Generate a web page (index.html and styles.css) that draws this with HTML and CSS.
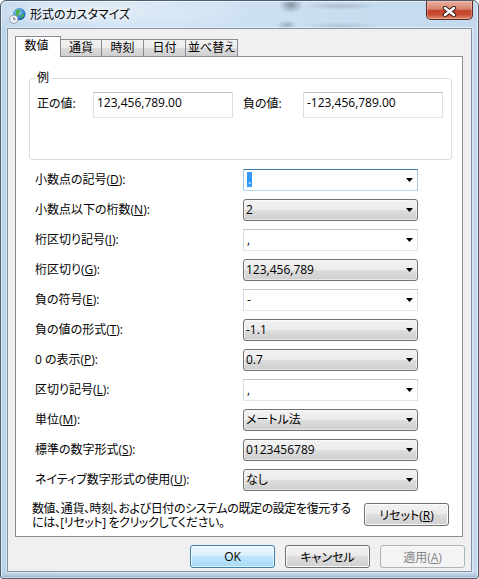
FILE: index.html
```html
<!DOCTYPE html>
<html>
<head>
    <meta charset="utf-8">
    <link rel="stylesheet" href="styles.css">
</head>
<body>
<div class="window">
    <div class="titlebar">
        <svg class="app-icon" viewBox="0 0 18 18">
            <defs>
                <radialGradient id="globe" cx="40%" cy="35%" r="65%">
                    <stop offset="0" stop-color="#9adaff"/>
                    <stop offset="1" stop-color="#0b5fb0"/>
                </radialGradient>
            </defs>
            <circle cx="11" cy="7.5" r="6.5" fill="url(#globe)"/>
            <path d="M8 3.5c1.5-.8 3-.6 3.8.4.5.8-.3 1.5-1.2 1.8-.9.3-1 1.3-.3 2 .6.6.4 1.5-.4 1.7-1 .3-2-.6-2.3-1.7C7.3 6.4 7.2 4.3 8 3.5z" fill="#4caf3a"/>
            <path d="M13.5 7.5c.8-.3 2 .2 2.4 1-.3 1.5-1.2 2.8-2.5 3.6-.6-.8-.5-1.8 0-2.5.3-.5-.2-1.6.1-2.1z" fill="#4caf3a"/>
            <circle cx="5" cy="13" r="4.3" fill="#eef2f6" stroke="#8a96a3" stroke-width=".9"/>
            <path d="M5 10.6V13h2" fill="none" stroke="#555" stroke-width=".9"/>
        </svg>
        <span class="title">形式のカスタマイズ</span>
        <div class="close">
            <svg width="15" height="11" viewBox="0 0 15 11">
                <path d="M3 2l9 7M12 2l-9 7" stroke="#3a1f1a" stroke-width="4.4" stroke-linecap="round"/>
                <path d="M3 2l9 7M12 2l-9 7" stroke="#fff" stroke-width="2.4" stroke-linecap="round"/>
            </svg>
        </div>
    </div>

    <div class="client">
        <div class="tabs">
            <div class="tab active">数値</div>
            <div class="tab">通貨</div>
            <div class="tab">時刻</div>
            <div class="tab">日付</div>
            <div class="tab">並べ替え</div>
        </div>

        <div class="panel">
            <fieldset class="group">
                <legend>例</legend>
                <div class="sample-row">
                    <span class="sample-label">正の値:</span>
                    <div class="sample-box">123,456,789.00</div>
                    <span class="sample-label neg">負の値:</span>
                    <div class="sample-box">-123,456,789.00</div>
                </div>
            </fieldset>

            <div class="settings">
                <div class="setting">
                    <span class="setting-label">小数点の記号(<u>D</u>):</span>
                    <div class="combo edit focus"><span class="combo-value"><span class="sel">.</span></span><svg class="arrow" viewBox="0 0 7 4"><path d="M0 0h7L3.5 4z"/></svg></div>
                </div>
                <div class="setting">
                    <span class="setting-label">小数点以下の桁数(<u>N</u>):</span>
                    <div class="combo list"><span class="combo-value">2</span><svg class="arrow" viewBox="0 0 7 4"><path d="M0 0h7L3.5 4z"/></svg></div>
                </div>
                <div class="setting">
                    <span class="setting-label">桁区切り記号(<u>I</u>):</span>
                    <div class="combo edit"><span class="combo-value">,</span><svg class="arrow" viewBox="0 0 7 4"><path d="M0 0h7L3.5 4z"/></svg></div>
                </div>
                <div class="setting">
                    <span class="setting-label">桁区切り(<u>G</u>):</span>
                    <div class="combo list"><span class="combo-value">123,456,789</span><svg class="arrow" viewBox="0 0 7 4"><path d="M0 0h7L3.5 4z"/></svg></div>
                </div>
                <div class="setting">
                    <span class="setting-label">負の符号(<u>E</u>):</span>
                    <div class="combo edit"><span class="combo-value">-</span><svg class="arrow" viewBox="0 0 7 4"><path d="M0 0h7L3.5 4z"/></svg></div>
                </div>
                <div class="setting">
                    <span class="setting-label">負の値の形式(<u>T</u>):</span>
                    <div class="combo list"><span class="combo-value">-1.1</span><svg class="arrow" viewBox="0 0 7 4"><path d="M0 0h7L3.5 4z"/></svg></div>
                </div>
                <div class="setting">
                    <span class="setting-label">0 の表示(<u>P</u>):</span>
                    <div class="combo list"><span class="combo-value">0.7</span><svg class="arrow" viewBox="0 0 7 4"><path d="M0 0h7L3.5 4z"/></svg></div>
                </div>
                <div class="setting">
                    <span class="setting-label">区切り記号(<u>L</u>):</span>
                    <div class="combo edit"><span class="combo-value">,</span><svg class="arrow" viewBox="0 0 7 4"><path d="M0 0h7L3.5 4z"/></svg></div>
                </div>
                <div class="setting">
                    <span class="setting-label">単位(<u>M</u>):</span>
                    <div class="combo list"><span class="combo-value">メートル法</span><svg class="arrow" viewBox="0 0 7 4"><path d="M0 0h7L3.5 4z"/></svg></div>
                </div>
                <div class="setting">
                    <span class="setting-label">標準の数字形式(<u>S</u>):</span>
                    <div class="combo list"><span class="combo-value">0123456789</span><svg class="arrow" viewBox="0 0 7 4"><path d="M0 0h7L3.5 4z"/></svg></div>
                </div>
                <div class="setting">
                    <span class="setting-label">ネイティブ数字形式の使用(<u>U</u>):</span>
                    <div class="combo list"><span class="combo-value">なし</span><svg class="arrow" viewBox="0 0 7 4"><path d="M0 0h7L3.5 4z"/></svg></div>
                </div>
            </div>

            <div class="reset-row">
                <p class="reset-text">数値、通貨、時刻、および日付のシステムの既定の設定を復元する<br>には、[リセット] をクリックしてください。</p>
                <button class="btn reset">リセット(<u>R</u>)</button>
            </div>
        </div>

        <div class="dialog-buttons">
            <button class="btn default">OK</button>
            <button class="btn">キャンセル</button>
            <button class="btn" disabled>適用(<u>A</u>)</button>
        </div>
    </div>
</div>
</body>
</html>
```

FILE: styles.css
```css
body {
    margin: 0;
    background: #fff;
    font-family: "Open Sans", "Noto Sans CJK JP", sans-serif;
    font-size: 12px;
    font-feature-settings: "palt";
    color: #000;
}

u {
    text-underline-offset: 1px;
}

/* window frame */
.window {
    width: 479px;
    height: 579px;
    box-sizing: border-box;
    border: 1px solid #4f5f70;
    border-radius: 6px 6px 3px 3px;
    padding-bottom: 6px;
    display: flex;
    flex-direction: column;
    background:
        radial-gradient(ellipse 12px 8px at 290px 4px, rgba(50,60,70,.45), transparent),
        radial-gradient(ellipse 40px 4px at 340px 5px, rgba(120,135,150,.35), transparent),
        radial-gradient(ellipse 10px 5px at 286px 24px, rgba(70,90,120,.35), transparent),
        radial-gradient(ellipse 40px 4px at 340px 25px, rgba(120,140,165,.3), transparent),
        linear-gradient(to top, #8ea5be 0, #b9cfe5 3px, rgba(255,255,255,0) 7px),
        radial-gradient(ellipse 160px 26px at 90px 10px, rgba(255,255,255,.55), transparent),
        linear-gradient(to right, #bad3eb, #cfe2f3 45%, #c3d9ee);
    box-shadow: inset 0 0 0 1px rgba(255,255,255,.55);
}

.titlebar {
    flex: none;
    height: 27px;
    display: flex;
    align-items: center;
    padding: 0 5px 0 8px;
}
.app-icon {
    width: 17px;
    height: 17px;
    margin-top: 2px;
}
.title {
    margin-left: 4px;
    line-height: 14px;
    text-shadow: 0 0 6px #fff, 0 0 10px rgba(255,255,255,.8);
}
.close {
    margin-left: auto;
    align-self: flex-start;
    width: 47px;
    height: 19px;
    box-sizing: border-box;
    padding-top: 2px;
    border: 1px solid #5e2a22;
    border-top: none;
    border-radius: 0 0 5px 5px;
    display: flex;
    align-items: center;
    justify-content: center;
    background: linear-gradient(#eab0a2, #d9846f 45%, #c2452c 52%, #c64b30 75%, #e28f70);
    box-shadow: inset 0 0 0 1px rgba(255,220,210,.35);
}

/* client area */
.client {
    flex: 1;
    margin: 0 6px;
    border: 1px solid #8292a2;
    background: #f0f0f0;
    display: flex;
    flex-direction: column;
    box-shadow: 0 0 0 1px rgba(255,255,255,.45);
}

.tabs {
    display: flex;
    align-items: flex-end;
    margin: 7px 0 0 7px;
}
.tab {
    height: 17px;
    box-sizing: border-box;
    margin-left: -1px;
    border: 1px solid #898c95;
    border-bottom: none;
    line-height: 16px;
    text-align: center;
    background: linear-gradient(#f2f2f2, #ebebeb 50%, #dddddd 50%, #cfcfcf);
}
.tab:nth-child(1) { width: 46px; margin-left: 0; }
.tab:nth-child(2) { width: 42px; }
.tab:nth-child(3) { width: 43px; }
.tab:nth-child(4) { width: 43px; }
.tab:nth-child(5) { width: 53px; }
.tab.active {
    height: 21px;
    margin-bottom: -1px;
    padding-top: 1px;
    padding-right: 3px;
    background: #fff;
    position: relative;
    z-index: 1;
}

.panel {
    margin-left: 7px;
    width: 448px;
    height: 481px;
    box-sizing: border-box;
    border: 1px solid #898c95;
    background: #fff;
    display: flex;
    flex-direction: column;
}

/* example group */
.group {
    margin: 14px 10px 0 13px;
    padding: 7px 7px 41px 7px;
    border: 1px solid #d5dfe5;
    border-radius: 3px;
    min-width: 0;
}
.group legend {
    padding: 0 2px;
    margin-left: -2px;
    line-height: 14px;
}
.sample-row {
    display: flex;
    align-items: flex-start;
}
.sample-label {
    width: 56px;
    padding-top: 5px;
    line-height: 14px;
}
.sample-label.neg {
    width: 60px;
    margin-left: 10px;
}
.sample-box {
    width: 140px;
    height: 26px;
    box-sizing: border-box;
    padding: 3px 0 0 3px;
    line-height: 14px;
    border: 1px solid;
    border-color: #b8bec6 #dde1e6 #e3e7eb #dde1e6;
}

/* settings rows */
.settings {
    margin-top: 9px;
    padding-left: 19px;
    display: flex;
    flex-direction: column;
    gap: 8px;
}
.setting {
    display: flex;
    align-items: center;
    height: 22px;
}
.setting-label {
    width: 208px;
    line-height: 16px;
}
.combo {
    width: 175px;
    height: 22px;
    box-sizing: border-box;
    display: flex;
    align-items: center;
    line-height: 18px;
}
.combo-value {
    flex: 1;
}
.combo.edit {
    border: 1px solid;
    border-color: #bfc6ce #d7dde4 #e0e5ea #d7dde4;
    background: #fff;
    padding-left: 3px;
}
.combo.edit.focus {
    border-color: #3d7bad #a4c9e3 #b7d9ed #a4c9e3;
}
.combo.list {
    border: 1px solid #707070;
    border-radius: 3px;
    padding-left: 2px;
    background: linear-gradient(#f2f2f2, #ebebeb 50%, #dddddd 50%, #cfcfcf);
    box-shadow: inset 0 0 0 1px rgba(255,255,255,.5);
}
.sel {
    display: inline-block;
    background: #3399ff;
    color: #fff;
    line-height: 15px;
    padding: 0 1px;
}
.arrow {
    width: 7px;
    height: 4px;
    margin-right: 4px;
    fill: #000;
}

/* reset area */
.reset-row {
    margin-top: 11px;
    padding: 0 13px 0 16px;
    display: flex;
    align-items: flex-start;
}
.reset-text {
    flex: 1;
    margin: 0;
    line-height: 14px;
    letter-spacing: -0.4px;
    white-space: nowrap;
}
.reset {
    margin-top: 1px;
}

/* buttons */
.btn {
    width: 85px;
    height: 23px;
    padding: 0;
    border: 1px solid #707070;
    border-radius: 3px;
    font: inherit;
    color: #000;
    background: linear-gradient(#f2f2f2, #ebebeb 50%, #dddddd 50%, #cfcfcf);
    box-shadow: inset 0 0 0 1px #fcfcfc;
}
.btn.default {
    border-color: #3c7fb1;
    background: linear-gradient(#eaf6fd, #d9f0fc 50%, #bee6fd 50%, #a7d9f5);
    box-shadow: inset 0 0 0 1px rgba(255,255,255,.7);
}
.btn:disabled {
    border-color: #adb2b5;
    background: #f4f4f4;
    color: #838383;
    box-shadow: none;
}
.dialog-buttons {
    display: flex;
    justify-content: flex-end;
    gap: 10px;
    margin-top: 8px;
    padding-right: 6px;
}
```
